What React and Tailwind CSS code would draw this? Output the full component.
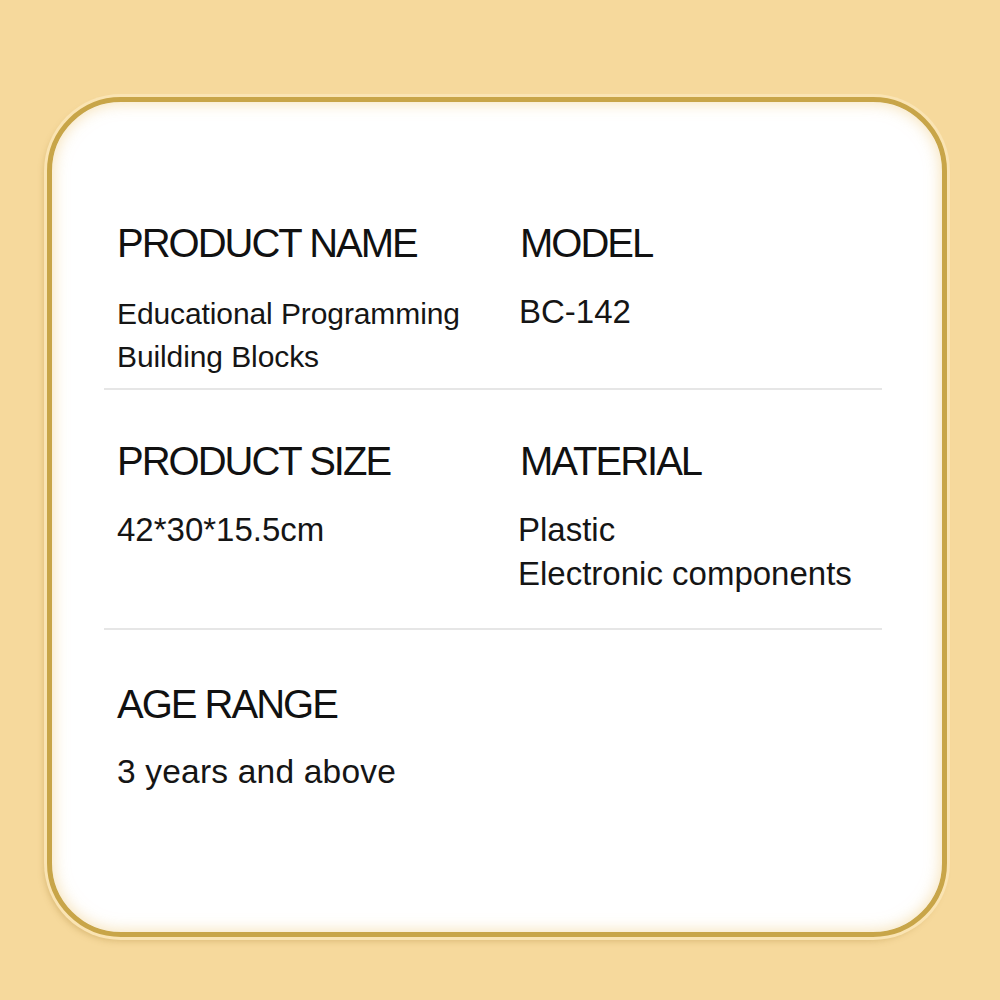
const SANS = { fontFamily: '"Liberation Sans", Arial, sans-serif' }

function Heading({ children }) {
  return (
    <div className="text-[40px] leading-[40px] tracking-[-2px] text-[#111]">{children}</div>
  )
}

export default function App() {
  return (
    <div className="w-[1000px] h-[1000px] bg-[#f6d99c] pt-[97px] pl-[47px]" style={SANS}>
      <div className="w-[900px] h-[840px] rounded-[74px] border-[5px] border-[#c8a548] bg-white pl-[52px] pt-[121px] shadow-[inset_0_0_16px_rgba(238,200,120,0.6),0_0_0_3px_#fae4b3,-3px_4px_6px_rgba(170,130,50,0.35)]">
        <div className="w-[778px] text-[#151515]">
          {/* row 1 */}
          <div className="grid grid-cols-[403px_1fr] px-[13px]">
            <div>
              <Heading>PRODUCT NAME</Heading>
              <div className="mt-[29px] text-[30px] leading-[43px] tracking-[-0.1px]">
                Educational Programming<br />Building Blocks
              </div>
            </div>
            <div>
              <Heading>MODEL</Heading>
              <div className="mt-[27px] -ml-[1px] text-[33px] leading-[44px]">BC-142</div>
            </div>
          </div>
          <div className="mt-[10px] h-[2px] bg-[#e6e6e6]" />

          {/* row 2 */}
          <div className="grid grid-cols-[403px_1fr] px-[13px] pt-[51px]">
            <div>
              <Heading>PRODUCT SIZE</Heading>
              <div className="mt-[27px] text-[33px] leading-[44px]">42*30*15.5cm</div>
            </div>
            <div>
              <Heading>MATERIAL</Heading>
              <div className="mt-[27px] -ml-[2px] text-[33px] leading-[44px]">
                Plastic<br />Electronic components
              </div>
            </div>
          </div>
          <div className="mt-[32px] h-[2px] bg-[#e6e6e6]" />

          {/* row 3 */}
          <div className="px-[13px] pt-[54px]">
            <Heading>AGE RANGE</Heading>
            <div className="mt-[26px] text-[33.5px] leading-[44px] tracking-[0.2px]">3 years and above</div>
          </div>
        </div>
      </div>
    </div>
  )
}
